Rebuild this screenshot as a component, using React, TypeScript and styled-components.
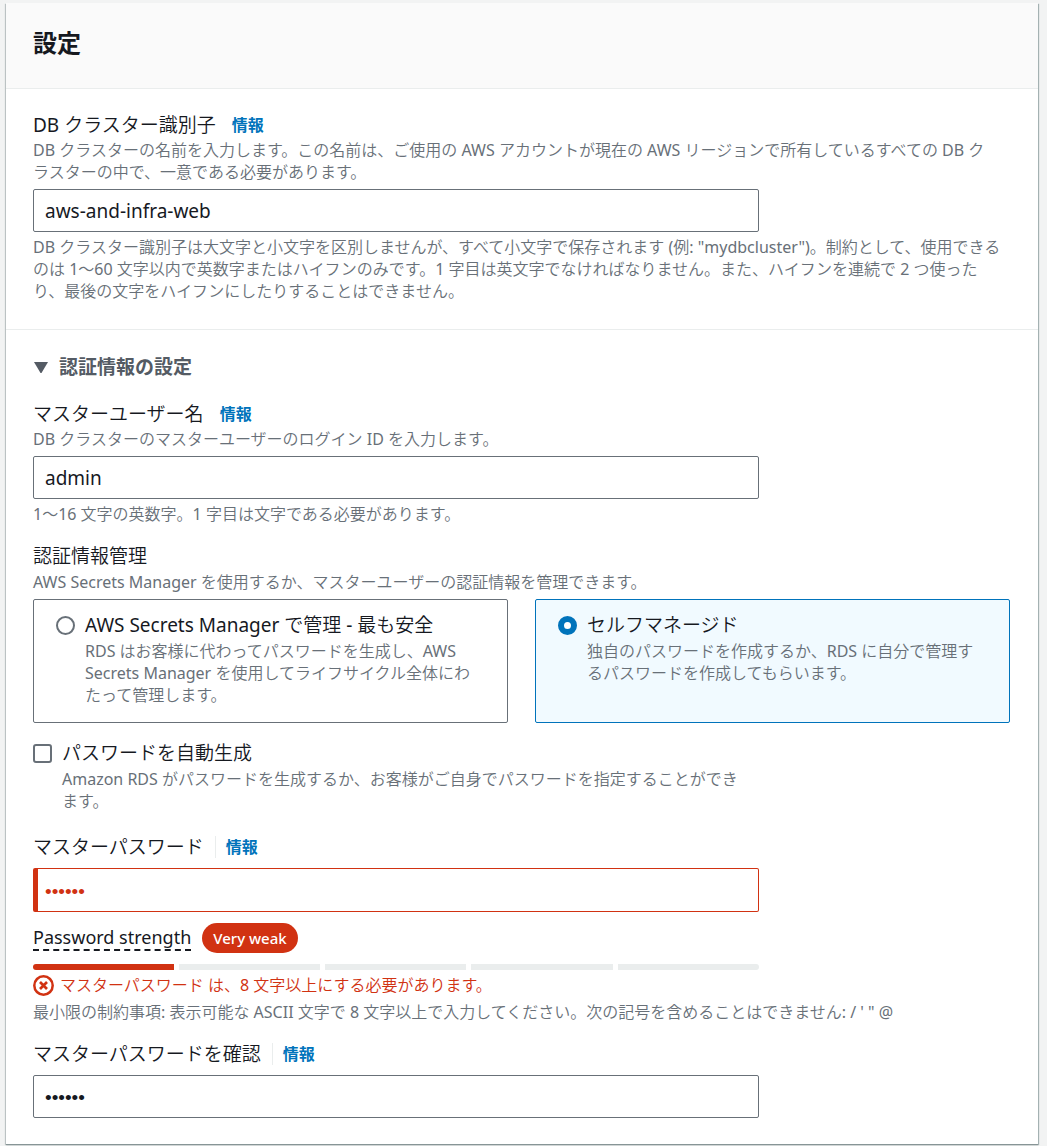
import React, { useState } from "react";
import styled, { createGlobalStyle, css } from "styled-components";

const color = {
  page: "#f2f3f3",
  text: "#16191f",
  muted: "#687078",
  header: "#545b64",
  link: "#0073bb",
  error: "#d13212",
  line: "#eaeded",
};

const boldFont = `"Noto Sans", "Noto Sans CJK JP", sans-serif`;

const GlobalStyle = createGlobalStyle`
  *, *::before, *::after { box-sizing: border-box; }
  body {
    margin: 0;
    background: ${color.page};
    color: ${color.text};
    font-family: "Noto Sans", "Noto Sans CJK JP DemiLight", "Noto Sans CJK JP", sans-serif;
    font-size: 19px;
    line-height: 26px;
  }
`;

const Card = styled.section`
  margin: 3px 9px 2px 6px;
  background: #fff;
  box-shadow: 0 1px 1px #879596, 1px 1px 1px #aab7b8, -1px 1px 1px #c6cccd;
`;

const CardHeader = styled.header`
  padding: 23px 28px 29px 27px;
  background: #fafafa;
  border-bottom: 1px solid ${color.line};
`;

const Title = styled.h2`
  margin: 0;
  font-family: ${boldFont};
  font-size: 24px;
  font-weight: 700;
  line-height: 33px;
`;

const Block = styled.div`
  padding: 23px 28px 27px 27px;
  & + & {
    border-top: 1px solid ${color.line};
    padding-top: 24px;
    padding-bottom: 22px;
  }
`;

const Field = styled.div`
  & + & {
    margin-top: 18px;
  }
`;

const LabelRow = styled.div<{ $gap?: number }>`
  display: flex;
  align-items: center;
  margin-bottom: ${(p) => p.$gap ?? 1}px;
`;

const InfoLink = styled.a<{ $divided?: boolean }>`
  margin-left: ${(p) => (p.$divided ? 11 : 16)}px;
  color: ${color.link};
  font-family: ${boldFont};
  font-size: 16px;
  font-weight: 700;
  line-height: 22px;
  text-decoration: none;
  ${(p) =>
    p.$divided &&
    css`
      padding-left: 10px;
      border-left: 1px solid ${color.line};
    `}
`;

const Hint = styled.p`
  margin: 0;
  color: ${color.muted};
  font-size: 16px;
  line-height: 22px;
`;

const Column = styled.div`
  width: calc(75% - 7px);
`;

const TextInput = styled.input<{ $invalid?: boolean }>`
  display: block;
  width: 100%;
  height: 43px;
  margin: 6px 0 4px;
  padding: 0 11px;
  border: 1px solid ${color.muted};
  border-radius: 2px;
  background: #fff;
  color: ${color.text};
  font: inherit;
  outline: none;
  &[type="password"] {
    padding-top: 3px;
    font-family: "Liberation Sans", Arial, sans-serif;
  }
  ${(p) =>
    p.$invalid &&
    css`
      height: 44px;
      padding-left: 7px;
      border-color: ${color.error};
      border-left-width: 5px;
      color: ${color.error};
    `}
`;

const Expander = styled.button`
  display: flex;
  align-items: center;
  gap: 11px;
  margin: 0 0 21px;
  padding: 0 0 0 1px;
  border: 0;
  background: none;
  color: ${color.header};
  font: inherit;
  font-family: ${boldFont};
  font-weight: 700;
`;

const Tiles = styled.div`
  display: grid;
  grid-template-columns: 1fr 1fr;
  gap: 27px;
  margin-top: 6px;
`;

const Choice = styled.label<{ $indent: number }>`
  display: grid;
  grid-template-columns: 19px 1fr;
  column-gap: ${(p) => p.$indent}px;
  align-content: start;
`;

const Tile = styled(Choice)<{ $selected: boolean }>`
  padding: 12px 22px 16px;
  border: 1px solid ${(p) => (p.$selected ? color.link : color.muted)};
  border-radius: 2px;
  background: ${(p) => (p.$selected ? "#f1faff" : "#fff")};
`;

const ChoiceText = styled.span`
  display: block;
`;

const ChoiceHint = styled(Hint).attrs({ as: "span" })`
  display: block;
  margin-top: 2px;
  white-space: nowrap;
`;

const Radio = styled.input`
  appearance: none;
  width: 19px;
  height: 19px;
  margin: 4px 0 0;
  border: 2px solid ${color.muted};
  border-radius: 50%;
  background: #fff;
  &:checked {
    border: 6px solid ${color.link};
  }
`;

const Checkbox = styled.input`
  appearance: none;
  width: 19px;
  height: 19px;
  margin: 4px 0 0;
  border: 2px solid ${color.muted};
  border-radius: 3px;
  background: #fff;
  &:checked {
    background: ${color.link};
    border-color: ${color.link};
  }
`;

const AutoGenerate = styled.div`
  margin: 17px 0 22px;
`;

const StrengthRow = styled.div`
  display: flex;
  align-items: center;
  gap: 11px;
  margin: 11px 0;
`;

const StrengthLabel = styled.span`
  border-bottom: 2px dashed ${color.text};
  font-size: 18px;
  line-height: 24px;
`;

const Badge = styled.span`
  padding: 0 11px;
  border-radius: 15px;
  background: ${color.error};
  color: #fff;
  font-size: 15px;
  font-weight: 500;
  line-height: 30px;
`;

const Meter = styled.div`
  display: grid;
  grid-template-columns: repeat(5, 1fr);
  gap: 5px;
  margin-bottom: 4px;
  border-radius: 3px;
  overflow: hidden;
`;

const MeterStep = styled.span<{ $filled: boolean }>`
  height: 6px;
  background: ${(p) => (p.$filled ? color.error : color.line)};
`;

const ErrorText = styled(Hint)`
  display: flex;
  align-items: center;
  gap: 6px;
  margin-bottom: 5px;
  color: ${color.error};
`;

const ErrorIcon = () => (
  <svg width="21" height="21" viewBox="0 0 21 21" fill="none" stroke={color.error} aria-hidden="true">
    <circle cx="10.5" cy="10.5" r="9.2" strokeWidth="2.5" />
    <path d="M7 7l7 7M14 7l-7 7" strokeWidth="2.7" />
  </svg>
);

export default function App() {
  const [open, setOpen] = useState(true);
  const [mode, setMode] = useState("self");
  return (
    <>
      <GlobalStyle />
      <Card>
        <CardHeader>
          <Title>設定</Title>
        </CardHeader>

        <Block>
          <LabelRow>
            <label htmlFor="cluster">DB クラスター識別子</label>
            <InfoLink href="#cluster-info">情報</InfoLink>
          </LabelRow>
          <Hint>
            DB クラスターの名前を入力します。この名前は、ご使用の AWS アカウントが現在の AWS リージョンで所有しているすべての DB ク
            <br />
            ラスターの中で、一意である必要があります。
          </Hint>
          <Column>
            <TextInput id="cluster" type="text" defaultValue="aws-and-infra-web" />
          </Column>
          <Hint>
            DB クラスター識別子は大文字と小文字を区別しませんが、すべて小文字で保存されます (例: "mydbcluster")。制約として、使用できる
            <br />
            のは 1～60 文字以内で英数字またはハイフンのみです。1 字目は英文字でなければなりません。また、ハイフンを連続で 2 つ使った
            <br />
            り、最後の文字をハイフンにしたりすることはできません。
          </Hint>
        </Block>

        <Block>
          <Expander type="button" aria-expanded={open} onClick={() => setOpen(!open)}>
            <svg width="14" height="12" viewBox="0 0 14 12" fill={color.header} aria-hidden="true">
              <path d="M0 1h14L7.5 12h-1z" />
            </svg>
            認証情報の設定
          </Expander>

          {open && (
            <>
              <Field>
                <LabelRow>
                  <label htmlFor="user">マスターユーザー名</label>
                  <InfoLink href="#user-info">情報</InfoLink>
                </LabelRow>
                <Hint>DB クラスターのマスターユーザーのログイン ID を入力します。</Hint>
                <Column>
                  <TextInput id="user" type="text" defaultValue="admin" />
                </Column>
                <Hint>1～16 文字の英数字。1 字目は文字である必要があります。</Hint>
              </Field>

              <Field role="radiogroup" aria-labelledby="credentials">
                <LabelRow $gap={2}>
                  <span id="credentials">認証情報管理</span>
                </LabelRow>
                <Hint>AWS Secrets Manager を使用するか、マスターユーザーの認証情報を管理できます。</Hint>
                <Tiles>
                  <Tile $indent={10} $selected={mode === "secrets"}>
                    <Radio type="radio" name="mode" checked={mode === "secrets"} onChange={() => setMode("secrets")} />
                    <ChoiceText>
                      AWS Secrets Manager で管理 - 最も安全
                      <ChoiceHint>
                        RDS はお客様に代わってパスワードを生成し、AWS
                        <br />
                        Secrets Manager を使用してライフサイクル全体にわ
                        <br />
                        たって管理します。
                      </ChoiceHint>
                    </ChoiceText>
                  </Tile>
                  <Tile $indent={10} $selected={mode === "self"}>
                    <Radio type="radio" name="mode" checked={mode === "self"} onChange={() => setMode("self")} />
                    <ChoiceText>
                      セルフマネージド
                      <ChoiceHint>
                        独自のパスワードを作成するか、RDS に自分で管理す
                        <br />
                        るパスワードを作成してもらいます。
                      </ChoiceHint>
                    </ChoiceText>
                  </Tile>
                </Tiles>
              </Field>

              <AutoGenerate>
                <Column>
                  <Choice $indent={10}>
                    <Checkbox type="checkbox" />
                    <ChoiceText>
                      パスワードを自動生成
                      <ChoiceHint>
                        Amazon RDS がパスワードを生成するか、お客様がご自身でパスワードを指定することができ
                        <br />
                        ます。
                      </ChoiceHint>
                    </ChoiceText>
                  </Choice>
                </Column>
              </AutoGenerate>

              <Field>
                <LabelRow $gap={8}>
                  <label htmlFor="password">マスターパスワード</label>
                  <InfoLink $divided href="#password-info">情報</InfoLink>
                </LabelRow>
                <Column>
                  <TextInput id="password" type="password" defaultValue="secret" $invalid aria-invalid="true" />
                  <StrengthRow>
                    <StrengthLabel>Password strength</StrengthLabel>
                    <Badge>Very weak</Badge>
                  </StrengthRow>
                  <Meter>
                    {[0, 1, 2, 3, 4].map((step) => (
                      <MeterStep key={step} $filled={step === 0} />
                    ))}
                  </Meter>
                </Column>
                <ErrorText>
                  <ErrorIcon />
                  マスターパスワード は、8 文字以上にする必要があります。
                </ErrorText>
                <Hint>最小限の制約事項: 表示可能な ASCII 文字で 8 文字以上で入力してください。次の記号を含めることはできません: / ' " @</Hint>
              </Field>

              <Field>
                <LabelRow $gap={8}>
                  <label htmlFor="confirm">マスターパスワードを確認</label>
                  <InfoLink $divided href="#confirm-info">情報</InfoLink>
                </LabelRow>
                <Column>
                  <TextInput id="confirm" type="password" defaultValue="secret" />
                </Column>
              </Field>
            </>
          )}
        </Block>
      </Card>
    </>
  );
}
